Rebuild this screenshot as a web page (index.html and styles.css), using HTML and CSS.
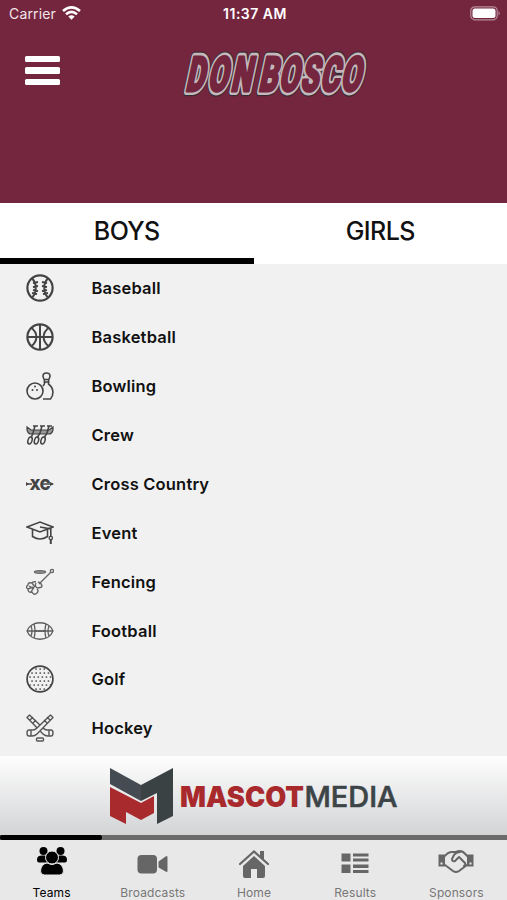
FILE: index.html
```
<!DOCTYPE html>
<html lang="en">
<head>
<meta charset="utf-8">
<title>Don Bosco Teams</title>
<link rel="stylesheet" href="styles.css">
</head>
<body>
<div class="app">
  <header class="header">
    <div class="status">
      <div class="carrier"><span>Carrier</span>
        <svg class="wifi" width="19" height="14" viewBox="0 0 19 14"><g fill="none" stroke="#fff" stroke-width="2.6"><path d="M1 5Q9.500-2.300 18 5"/><path d="M4 8.300Q9.500 3.600 15 8.300"/></g><path fill="#fff" d="M6.300 10.500Q9.500 8 12.700 10.500L9.500 13.700Z"/></svg>
      </div>
      <div class="clock">11:37 AM</div>
      <svg class="battery" width="31" height="15" viewBox="0 0 31 15"><rect x=".8" y=".8" width="26.400" height="13" rx="4" fill="none" stroke="#b58b9b" stroke-width="1.200"/><rect x="2.500" y="2.500" width="23" height="9.600" rx="2.500" fill="#fff"/><path d="M28.500 5Q31 7.300 28.500 9.600Z" fill="#b58b9b"/></svg>
    </div>
    <div class="brand">
      <button class="menu" aria-label="Menu"><i></i><i></i><i></i></button>
      <svg class="logo" width="188" height="50" viewBox="0 0 188 50">
        <defs><g id="word"><text x="0" y="0" transform="translate(3 0) scale(.6 1)" textLength="109" lengthAdjust="spacing">DON</text><text x="0" y="0" transform="translate(76 0) scale(.6 1)" textLength="170" lengthAdjust="spacing">BOSCO</text></g></defs>
        <g class="wordmark" transform="translate(1 42) skewX(-12)">
          <use href="#word" fill="#382a33" stroke="#382a33" stroke-width="10.500"/>
          <use href="#word" fill="#c3b9bc" stroke="#c3b9bc" stroke-width="8"/>
          <use href="#word" fill="#75263f" stroke="#75263f" stroke-width="2.800"/>
        </g>
      </svg>
    </div>
  </header>
  <nav class="tabs"><a class="tab active">BOYS</a><a class="tab">GIRLS</a></nav>
  <main class="list">
    <div class="row"><svg class="icon" viewBox="0 0 28 28"><circle cx="14" cy="14" r="12.600" stroke-width="2.200"/><path stroke-width="2" d="M6 4.500C11 9 11 19 6 23.500M22 4.500C17 9 17 19 22 23.500M7 9l5-1M7 13l5-1M7 16l5 1M6 19l5 1M21 9l-5-1M21 13l-5-1M21 16l-5 1M22 19l-5 1"/></svg><span>Baseball</span></div>
    <div class="row"><svg class="icon" viewBox="0 0 28 28"><circle cx="14" cy="14" r="12.600" stroke-width="2.200"/><path stroke-width="2" d="M14 1v26M1 14h26M5.500 5C12 10 12 18 5.500 23M22.500 5C16 10 16 18 22.500 23"/></svg><span>Basketball</span></div>
    <div class="row"><svg class="icon" viewBox="0 0 28 28"><circle cx="9" cy="19" r="8" stroke-width="1.600"/><path stroke-width="1.600" d="M18.500 12V9C18.500 7 17 6 17 4C17 0 24 0 24 4C24 6 22.500 7 22.500 9V12C28 16 28 23 24.500 27H17M17.500 7.500h6M17.500 10h6M18.500 12l-1.500 2"/><g fill="#444" stroke="none"><circle cx="9" cy="14.500" r="1"/><circle cx="6.500" cy="18" r="1"/><circle cx="11" cy="18" r="1"/></g></svg><span>Bowling</span></div>
    <div class="row"><svg class="icon" viewBox="0 0 28 28"><path fill="#999" stroke-width="1.200" d="M1 6v3q1 4 4 4h18q3 0 4-4V6l-4 3H5z"/><path stroke-width="1.600" d="M7 5h5M14 5h5M21 5h5M9 5L7 12l-2 5M16 5l-2 7-3 5M23 5l-2 7-3 5"/><g stroke-width="1.500"><ellipse cx="4" cy="19.500" rx="2" ry="3.600" transform="rotate(18 4 19.500)"/><ellipse cx="10.500" cy="19.500" rx="2" ry="3.600" transform="rotate(18 10.500 19.500)"/><ellipse cx="17" cy="19.500" rx="2" ry="3.600" transform="rotate(18 17 19.500)"/></g></svg><span>Crew</span></div>
    <div class="row"><svg class="icon" viewBox="0 0 28 28"><path stroke-width="1.300" d="M0 14h6M17 14h10"/><path fill="#444" stroke="none" d="M0 12l3 2-3 2zM24 12l4 2-4 2z"/><text class="xc" x="3.500" y="19.500" textLength="21" lengthAdjust="spacingAndGlyphs">XC</text></svg><span>Cross Country</span></div>
    <div class="row"><svg class="icon" viewBox="0 0 28 28"><path stroke-width="1.600" d="M1 8L14 3l13 5-13 5zM6.500 10.500v7q7.500 5 15 0v-7M14 8l10.800 2v8"/><circle cx="24.800" cy="19" r="1.700" stroke-width="1.300"/><path stroke-width="2" d="M24.800 21v4"/></svg><span>Event</span></div>
    <div class="row"><svg class="icon" viewBox="0 0 28 28"><g stroke="#666" stroke-width="1.400"><path d="M13 16L25 4M12 14q4 1 4 5M10 15q-2 4 2 5l4-1"/><circle cx="26" cy="3" r="1.600"/><ellipse cx="14" cy="4" rx="5.500" ry="1.200" fill="#aaa"/><path d="M10 14q-3-1-4 1-4-1-4 2-3 2 0 4 0 4 4 3 2 4 5 1 2-2 0-4M3 18l5 3M6 15l3 4M5 24l3-5M2 21l5-2"/></g></svg><span>Fencing</span></div>
    <div class="row"><svg class="icon" viewBox="0 0 28 28"><g stroke="#5c5c5c" stroke-width="1.300"><path d="M1 14C5 3 23 3 27 14C23 25 5 25 1 14Z"/><path d="M5 9q2 5 0 10M8 7q2 7 0 14M23 9q-2 5 0 10M20 7q-2 7 0 14M1 14h26"/><path stroke-width="2.200" stroke-dasharray="2 .7" d="M9 14h10"/></g></svg><span>Football</span></div>
    <div class="row"><svg class="icon" viewBox="0 0 28 28"><circle cx="14" cy="14" r="12.900" stroke-width="1.700"/><g stroke-width="1.700" stroke-linecap="round" stroke-dasharray=".1 4"><path d="M10 4h9M6 8h17M4 12h22M6 16h19M4 20h21M10 24h9"/></g></svg><span>Golf</span></div>
    <div class="row"><svg class="icon" viewBox="0 0 28 28"><g stroke="#555" stroke-width="1.400" stroke-linejoin="round"><path d="M3.500 1L1 3.500L17 20q2 2 5 2h3q2 0 2-3t-2-3h-4q-2 0-4-2zM4 6l3-3M7 9l3-3M23 16v6"/><path fill="#f1f1f1" d="M24.500 1L27 3.500L11 20q-2 2-5 2H3q-2 0-2-3t2-3h4q2 0 4-2zM24 6l-3-3M21 9l-3-3M5 16v6"/><rect x="10.500" y="24" width="7" height="3" rx="1"/></g></svg><span>Hockey</span></div>
  </main>
  <section class="sponsor">
    <svg width="292" height="60" viewBox="0 0 292 60">
      <path fill="#444b53" d="M1 1L32 18V34L1 17Z"/><path fill="#3a4244" d="M32 18L64 1V49L48 57V26L32 34Z"/><path fill="#a92a2d" d="M1 20L32 36L45 29V46L32 53L17 45V57L1 49Z"/>
      <g class="mm"><text x="71" y="39.500" textLength="124" lengthAdjust="spacingAndGlyphs" fill="#a92a2d" font-weight="900">MASCOT</text><text x="195.500" y="39.500" textLength="93" lengthAdjust="spacingAndGlyphs" fill="#3c4447" stroke="#3c4447" stroke-width=".6" font-weight="500">MEDIA</text></g>
    </svg>
  </section>
  <div class="track"><div class="thumb"></div></div>
  <nav class="bottom">
    <a class="item current"><svg viewBox="0 0 36 34"><g fill="currentColor"><circle cx="9.500" cy="7" r="4"/><circle cx="26.500" cy="7" r="4"/><path d="M8 11.500h3q1 0 2 2 0 3 2 5H5q-2 0-2-3 0-4 5-4M28 11.500h-3q-1 0-2 2 0 3-2 5h10q2 0 2-3 0-4-5-4"/><path stroke="#e8e8e8" d="M13 19q5 3 10 0 6 1 6.500 8 0 4-4 4h-15q-4 0-4-4 .5-7 6.500-8"/><circle cx="18" cy="13.500" r="6.500" stroke="#e8e8e8"/></g></svg><span>Teams</span></a>
    <a class="item"><svg viewBox="0 0 36 34"><rect x="2.500" y="11" width="19.500" height="18.500" rx="4" fill="currentColor"/><path fill="currentColor" stroke="currentColor" stroke-width="2" stroke-linejoin="round" d="M24.500 18l7-5v14l-7-4z"/></svg><span>Broadcasts</span></a>
    <a class="item"><svg viewBox="0 0 36 34"><path fill="currentColor" d="M7 22L18 12l11 10v10q0 2-2 2h-6V25h-6v9H9q-2 0-2-2z"/><path fill="none" stroke="currentColor" stroke-width="2.200" stroke-linecap="round" d="M4 20L18 7.500l14 12.500"/><path fill="currentColor" d="M24 7h4v9l-4-4z"/></svg><span>Home</span></a>
    <a class="item"><svg viewBox="0 0 36 34"><path fill="currentColor" d="M4.500 9.500h9v8h-9zM4.500 20.500h9v8.500h-9zM16 9.500h15.500v3H16zM16 14.500h15.500v3H16zM16 20.500h15.500v3.500H16zM16 26h15.500v3H16z"/></svg><span>Results</span></a>
    <a class="item"><svg viewBox="0 0 36 34"><g fill="none" stroke="currentColor" stroke-width="2" stroke-linejoin="round" stroke-linecap="round"><path d="M7 12q3-4 7-4h4M18 8q6-3 11 4M7 21l8 6q3 2 6 0l8-6M22 8q-4 0-6 3l-2 4q0 3 3 2l4-4 6 6q1 2-1 3"/></g><path fill="currentColor" fill-rule="evenodd" d="M.5 10.500h6.500v12H.5zM29 10.500h6.500v12H29zM2.500 18.500v2h2v-2zM31.500 18.500v2h2v-2z"/></svg><span>Sponsors</span></a>
  </nav>
</div>
</body>
</html>
```
FILE: styles.css
```
* { box-sizing: border-box; }
body { margin: 0; font-family: Inter, "Liberation Sans", sans-serif; color: #111; }
svg { display: block; flex: none; }
.app { width: 507px; height: 900px; display: flex; flex-direction: column; overflow: hidden; background: #f1f1f1; }
.header { height: 203px; flex: none; background: #75263f; }
.status { height: 28px; display: grid; grid-template-columns: 1fr auto 1fr; align-items: center; padding: 0 6px 2px 9px; color: #fff; }
.carrier { display: flex; align-items: center; gap: 6px; font-size: 14px; letter-spacing: .15px; color: #f1e5e9; }
.clock { font-size: 14px; font-weight: 600; letter-spacing: .5px; padding-top: 1px; }
.battery { justify-self: end; }
.brand { display: flex; align-items: center; height: 88px; padding-left: 25px; }
.menu { border: 0; padding: 0; margin: -3px 0 0; background: none; width: 35px; display: flex; flex-direction: column; gap: 5px; }
.menu i { height: 6.500px; background: #fff; border-radius: 1.500px; }
.logo { margin-left: 121px; margin-top: 4px; overflow: visible; }
.wordmark { font-family: Roboto, "Liberation Sans", sans-serif; font-weight: 900; font-size: 48px; stroke-linejoin: round; }
.tabs { height: 61px; flex: none; display: flex; background: #fff; }
.tab { flex: 1; text-align: center; font-size: 25px; line-height: 57px; height: 61px; font-weight: 500; letter-spacing: -.6px; border-bottom: 6px solid transparent; }
.tab.active { border-color: #000; }
.list { flex: none; height: 492px; background: #f1f1f1; }
.row { height: 48.880px; display: flex; align-items: center; padding-left: 26px; gap: 37.500px; font-size: 16.500px; font-weight: 600; letter-spacing: .18px; }
.icon { width: 28px; height: 28px; fill: none; stroke: #444; }
.xc { font: 900 15px Inter, sans-serif; letter-spacing: 0; fill: #444; stroke: none; }
.sponsor { height: 79px; flex: none; padding: 11px 0 0 109px; background: linear-gradient(#fefefe, #d3d4d6); }
.mm { font-family: Inter, "Liberation Sans", sans-serif; font-size: 28.500px; }
.track { height: 5px; flex: none; background: #6b6b6b; }
.thumb { width: 102px; height: 5px; background: #000; border-radius: 2px; }
.bottom { flex: 1; display: flex; background: #e8e8e8; padding-top: 4px; }
.item { flex: 1; display: flex; flex-direction: column; align-items: center; color: #666; font-size: 12px; letter-spacing: .12px; line-height: 16px; gap: 8px; }
.item svg { width: 36px; height: 34px; }
.item span { color: #777; margin-top: -1px; }
.item.current { padding-left: 1px; }
.item.current, .item.current span { color: #000; }
```
